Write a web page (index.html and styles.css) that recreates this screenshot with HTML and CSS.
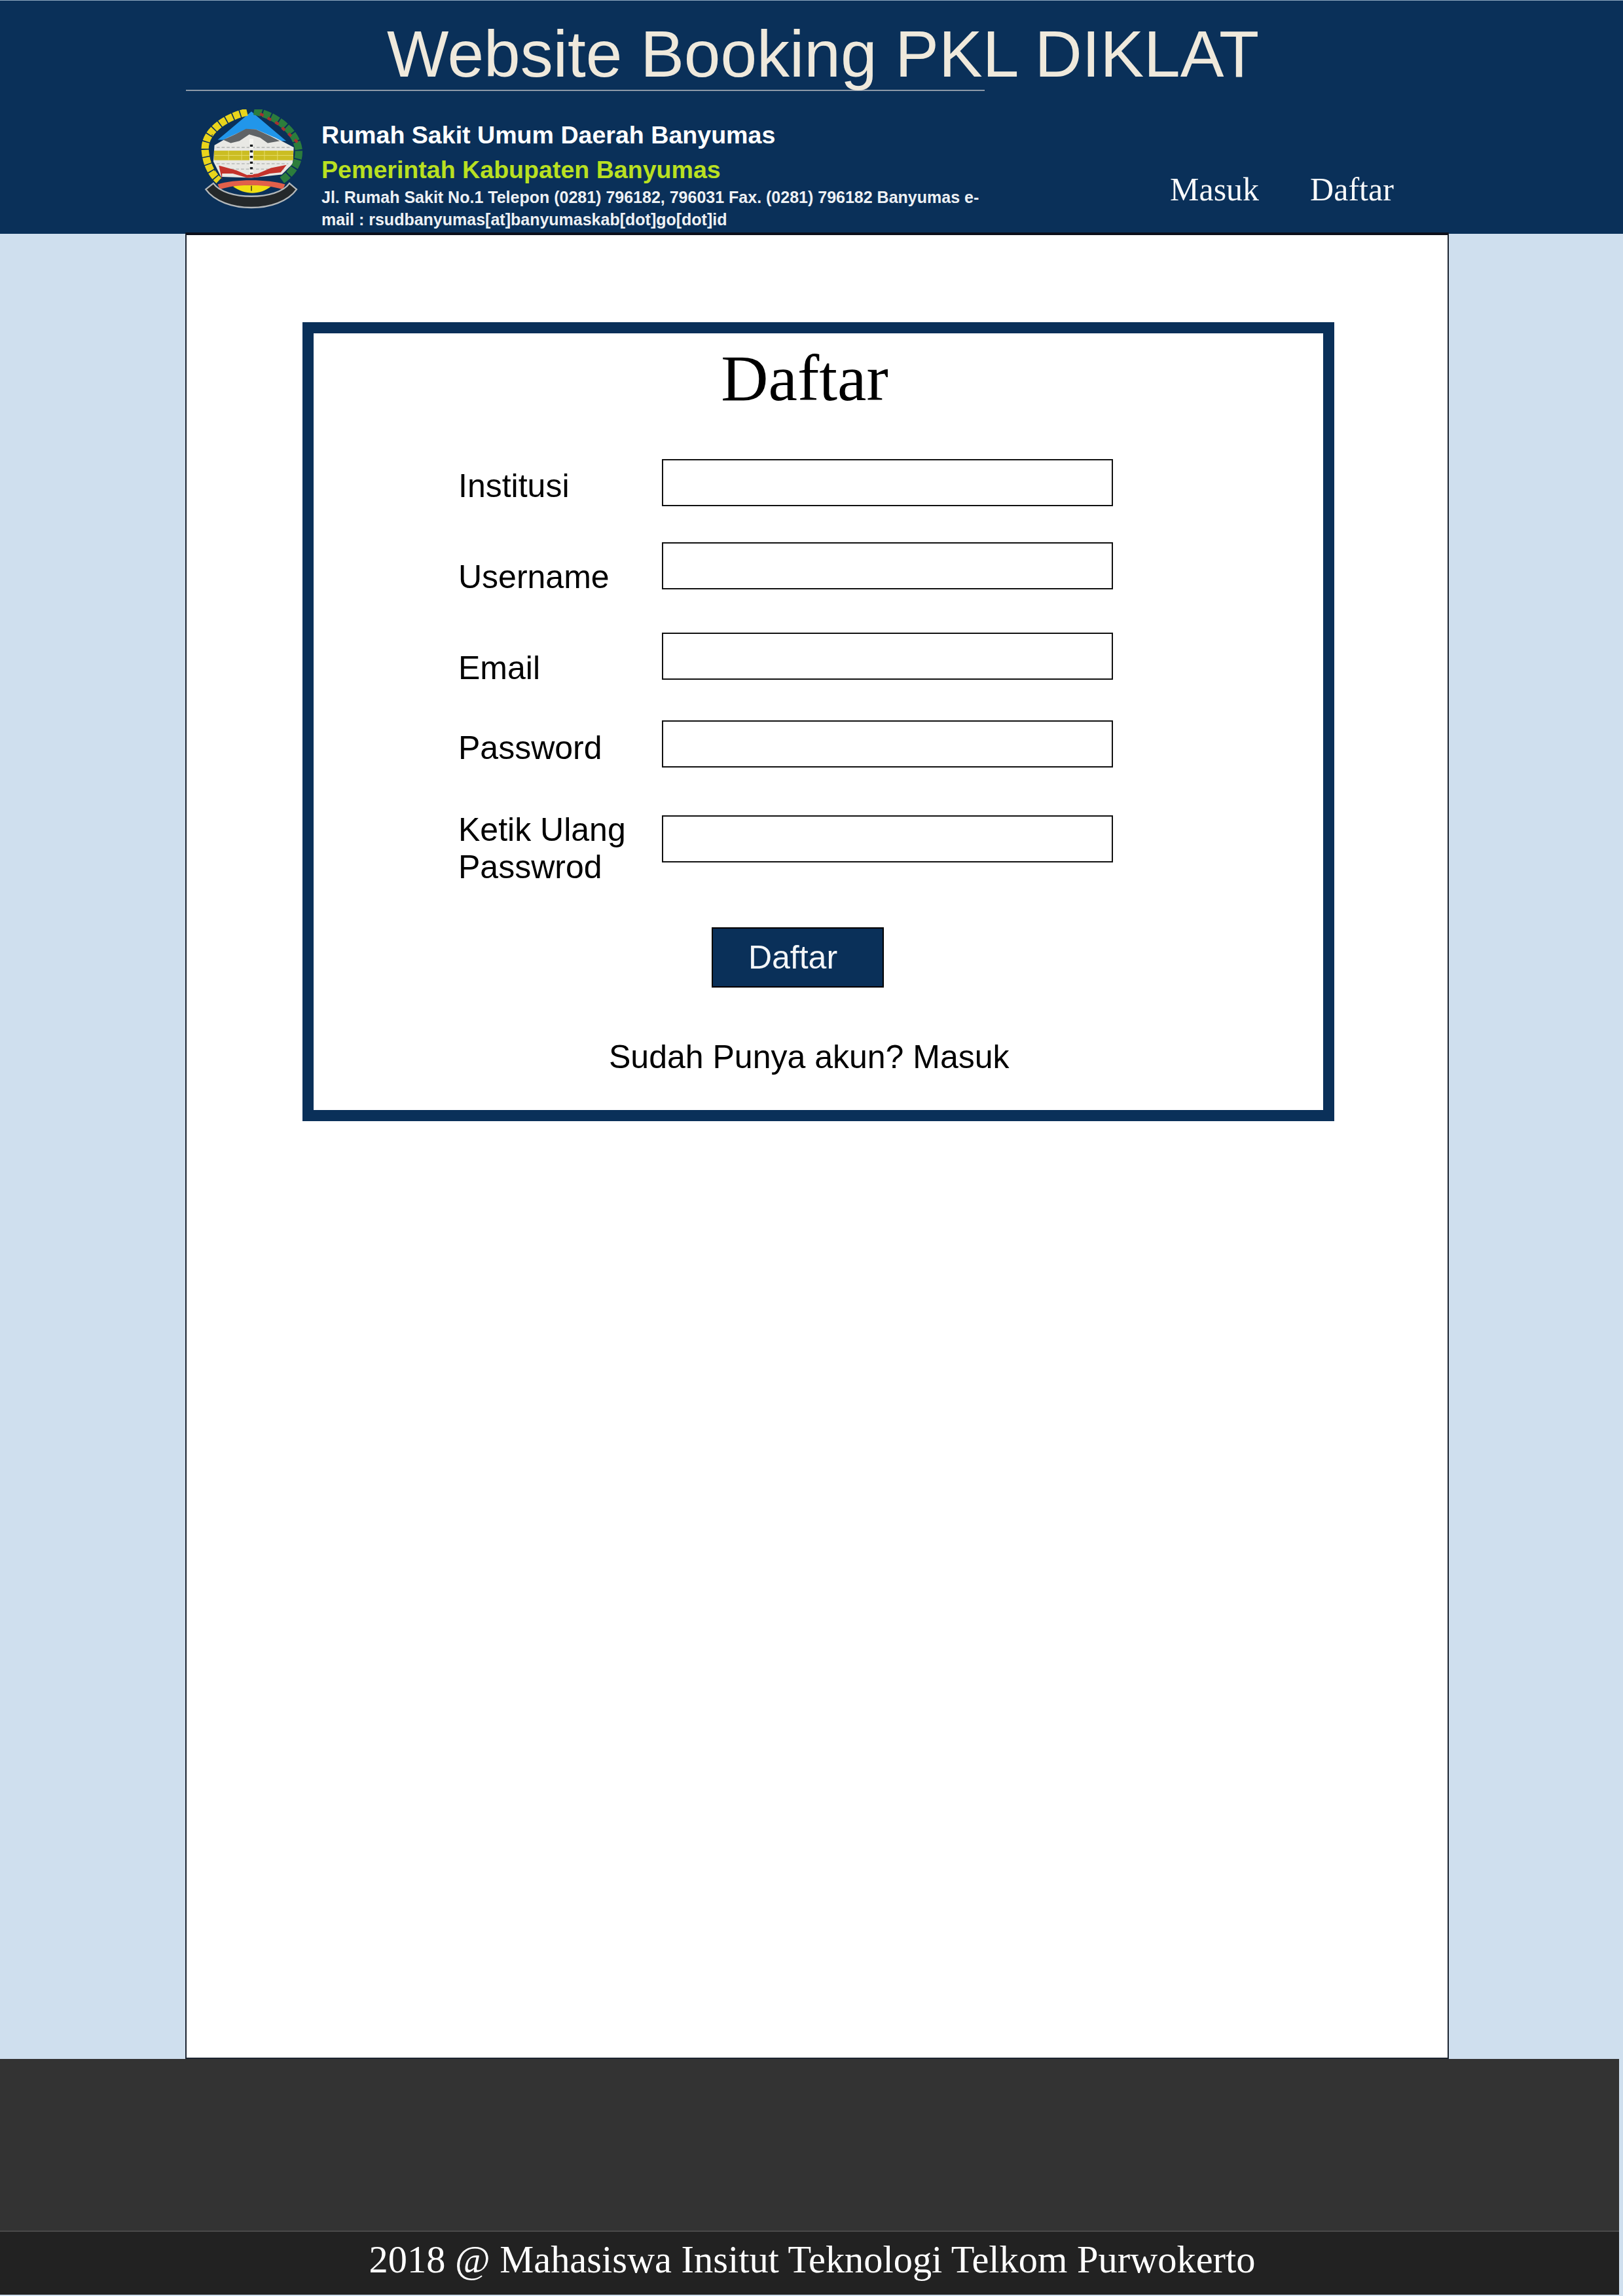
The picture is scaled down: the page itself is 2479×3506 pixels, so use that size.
FILE: index.html
```html
<!DOCTYPE html>
<html lang="id">
<head>
<meta charset="utf-8">
<title>Website Booking PKL DIKLAT</title>
<link rel="stylesheet" href="styles.css">
</head>
<body>
<header class="header">
  <h1 class="site-title">Website Booking PKL DIKLAT</h1>
  <div class="header-rule"></div>
  <div class="header-row">
    <div class="brand">
      <svg class="emblem" viewBox="78 50 467 470" aria-hidden="true">
        <path d="M310 60 L155 190 L470 195 Z" fill="#2196ea"/>
        <path d="M140 215 L200 180 L285 142 L330 142 L420 180 L505 225 L500 300 L450 350 L310 365 L170 360 L135 290 Z" fill="#e8e8e4"/>
        <path d="M180 190 L235 165 L285 140 L330 142 L395 172 L440 195 L385 205 L350 180 L300 165 L255 195 L215 205 Z" fill="#5f6366"/>
        <path d="M150 225 H490 M150 300 H480 M170 325 H460" stroke="#b7b9b8" stroke-width="5" stroke-dasharray="14 9"/>
        <rect x="138" y="240" width="365" height="44" fill="#cbbd22"/>
        <path d="M140 262 H503 M205 240 V284 M265 240 V284 M370 240 V284 M430 240 V284" stroke="#e7de6a" stroke-width="3"/>
        <path d="M160 308 L240 330 L290 352 L340 345 L400 320 L472 305 L445 340 L395 345 L340 362 L290 365 L225 345 L175 345 L175 375 Z" fill="#c4332c"/>
        <path d="M310 185 V350" stroke="#f4f4f0" stroke-width="18"/>
        <path d="M310 212 V345" stroke="#15181a" stroke-width="13" stroke-dasharray="10 16"/>
        <path d="M290 62 C175 90 90 160 97 240 C102 300 125 345 160 378" fill="none" stroke="#e9d41b" stroke-width="34" stroke-dasharray="30 5"/>
        <path d="M130 165 C118 215 120 300 150 350" fill="none" stroke="#0a3059" stroke-width="3" stroke-dasharray="12 20"/>
        <path d="M322 58 C420 75 520 150 528 240 C530 300 495 345 448 378" fill="none" stroke="#2c7d3c" stroke-width="34" stroke-dasharray="36 6"/>
        <path d="M350 70 L430 115 L490 170 L525 205" fill="none" stroke="#a5312f" stroke-width="13" stroke-dasharray="18 22"/>
        <path d="M225 405 C280 445 350 445 400 405 L365 398 L250 398 Z" fill="#f0e012"/>
        <path d="M310 402 V425" stroke="#222" stroke-width="4"/>
        <path d="M155 395 C230 370 385 370 465 395 L455 418 C370 392 240 392 165 418 Z" fill="#e2604a"/>
        <path d="M100 418 L135 390 C190 470 430 470 485 390 L518 418 C440 530 180 530 100 418 Z" fill="#24282a" stroke="#b4b8ba" stroke-width="7"/>
      </svg>
      <div class="brand-text">
        <div class="brand-name">Rumah Sakit Umum Daerah Banyumas</div>
        <div class="brand-gov">Pemerintah Kabupaten Banyumas</div>
        <div class="brand-addr">Jl. Rumah Sakit No.1 Telepon (0281) 796182, 796031 Fax. (0281) 796182 Banyumas e-<br>mail : rsudbanyumas[at]banyumaskab[dot]go[dot]id</div>
      </div>
    </div>
    <nav class="nav">
      <a class="nav-link">Masuk</a>
      <a class="nav-link">Daftar</a>
    </nav>
  </div>
</header>
<main class="main">
  <section class="card">
    <h2 class="card-title">Daftar</h2>
    <form class="form">
      <div class="row row-institusi"><label class="label">Institusi</label><input class="input" type="text"></div>
      <div class="row row-username"><label class="label">Username</label><input class="input" type="text"></div>
      <div class="row row-email"><label class="label">Email</label><input class="input" type="text"></div>
      <div class="row row-password"><label class="label">Password</label><input class="input" type="password"></div>
      <div class="row row-ulang"><label class="label">Ketik Ulang Passwrod</label><input class="input" type="password"></div>
      <button class="submit" type="button">Daftar</button>
      <p class="login-note">Sudah Punya akun? Masuk</p>
    </form>
  </section>
</main>
<footer class="footer">
  <div class="copyright">2018 @ Mahasiswa Insitut Teknologi Telkom Purwokerto</div>
</footer>
</body>
</html>
```
FILE: styles.css
```css
* { box-sizing: border-box; }
html, body { margin: 0; padding: 0; }
body {
  width: 2479px;
  height: 3506px;
  background: #cfdfee;
  font-family: "Liberation Sans", Arial, sans-serif;
  overflow: hidden;
}
.header {
  height: 357px;
  background: #0a3059;
  border-top: 1px solid #8fa8c0;
  padding: 3px 0 0 284px;
}
.site-title {
  margin: 0;
  width: 1946px;
  height: 133px;
  text-align: center;
  color: #efe9dc;
  font-weight: 400;
  font-size: 100px;
  line-height: 156px;
  white-space: nowrap;
}
.header-rule {
  width: 1220px;
  height: 2px;
  background: #8d99a8;
}
.header-row {
  display: flex;
  align-items: flex-start;
}
.brand {
  display: flex;
  width: 1503px;
  padding: 28px 0 0 22px;
}
.emblem {
  width: 157px;
  height: 156px;
  flex: none;
  filter: blur(0.7px);
}
.brand-text {
  margin-left: 28px;
  padding-top: 17px;
  font-weight: 700;
  white-space: nowrap;
}
.brand-name {
  color: #fff;
  font-size: 37.6px;
  line-height: 44px;
}
.brand-gov {
  margin-top: 9px;
  color: #b9e021;
  font-size: 37.6px;
  line-height: 44px;
}
.brand-addr {
  margin-top: 3px;
  color: #eef1f4;
  font-size: 25px;
  line-height: 34px;
}
.nav {
  display: flex;
  gap: 78px;
  padding-top: 120px;
}
.nav-link {
  color: #f8f9fa;
  font-family: "Liberation Serif", "Times New Roman", serif;
  font-size: 50px;
  line-height: 60px;
}
.main {
  width: 1930px;
  height: 2789px;
  margin: -2px 0 0 283px;
  background: #fff;
  border: 2px solid #1c2430;
  border-top: 4px solid #0c0f1a;
  padding: 133px 0 0 177px;
}
.card {
  width: 1576px;
  height: 1220px;
  border: 17px solid #0a3059;
  background: #fff;
}
.card-title {
  margin: 0;
  width: 1500px;
  height: 192px;
  padding-top: 11px;
  text-align: center;
  font-family: "Liberation Serif", "Times New Roman", serif;
  font-weight: 400;
  font-size: 100px;
  line-height: 115px;
  color: #000;
}
.form {
  display: flex;
  flex-direction: column;
  padding-left: 221px;
}
.row {
  display: flex;
  align-items: flex-start;
  height: 72px;
}
.row-username { margin-top: 55px; }
.row-email { margin-top: 66px; }
.row-password { margin-top: 62px; }
.row-ulang { margin-top: 73px; }
.label {
  width: 311px;
  flex: none;
  font-size: 50px;
  line-height: 57px;
  color: #000;
}
.row-institusi .label { margin-top: 13px; }
.row-username .label { margin-top: 25px; }
.row-email .label { margin-top: 26px; }
.row-password .label { margin-top: 14px; }
.row-ulang .label { margin-top: -6px; }
.input {
  width: 689px;
  height: 72px;
  border: 2px solid #111;
  background: #fff;
  border-radius: 0;
  padding: 0;
  margin: 0;
}
.submit {
  width: 263px;
  height: 92px;
  margin: 99px 0 0 387px;
  border: 2px solid #000;
  background: #0a3059;
  color: #f4f6f8;
  font-family: "Liberation Sans", Arial, sans-serif;
  font-size: 50px;
  padding: 0 15px 0 0;
}
.login-note {
  margin: 76px 0 0 230px;
  font-size: 50px;
  line-height: 60px;
  color: #000;
  white-space: nowrap;
}
.footer {
  width: 2473px;
  height: 360px;
  background: #333;
  padding-top: 262px;
}
.copyright {
  width: 2473px;
  height: 98px;
  background: #222;
  border-top: 2px solid #4a4a4a;
  color: #fff;
  text-align: center;
  font-family: "Liberation Serif", "Times New Roman", serif;
  font-size: 58.4px;
  line-height: 85px;
  padding-left: 8px;
}
```
